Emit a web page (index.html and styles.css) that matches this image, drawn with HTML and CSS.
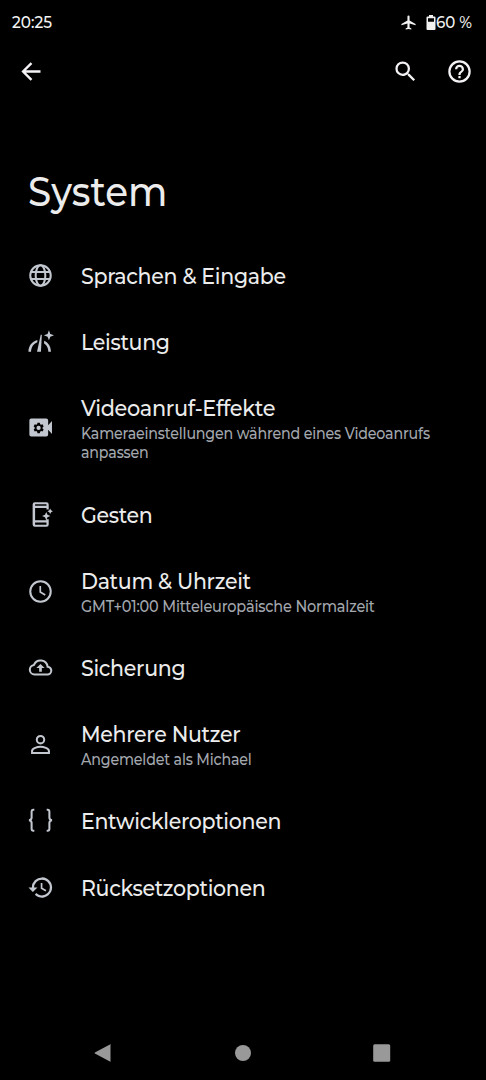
FILE: index.html
```html
<!DOCTYPE html>
<html lang="de">
<head>
<meta charset="utf-8">
<title>System</title>
<link rel="stylesheet" href="styles.css">
</head>
<body>
<div class="screen">
  <header class="status">
    <span class="time">20:25</span>
    <svg class="plane" viewBox="0 0 24 24"><path d="M22 16v-2l-8.500-5V3.500a1.500 1.500 0 0 0-3 0V9L2 14v2l8.500-2.500V19L8 20.500V22l4-1 4 1v-1.500L13.500 19v-5.500z"/></svg>
    <svg class="battery" viewBox="0 0 10 16"><path fill-rule="evenodd" d="M3 0h4v1.500h1.500q1 0 1 1v11.500q0 1-1 1H1.500q-1 0-1-1V2.500q0-1 1-1H3zM2 3.200v3.500h6V3.200z"/></svg>
    <span class="percent">60 %</span>
  </header>
  <nav class="toolbar">
    <svg class="tool back" viewBox="0 0 24 24"><path d="M20 12H5M12 4.500 4.500 12l7.500 7.500"/></svg>
    <svg class="tool search" viewBox="0 0 24 24"><path d="M15.500 14h-.79l-.28-.27A6.470 6.470 0 0 0 16 9.500 6.500 6.500 0 1 0 9.500 16c1.610 0 3.090-.59 4.230-1.570l.27.28v.79l5 4.990L20.490 19zM9.500 14a4.500 4.500 0 1 1 0-9 4.500 4.500 0 0 1 0 9z"/></svg>
    <svg class="tool help" viewBox="0 0 24 24"><path d="M11 18h2v-2h-2zm1-16a10 10 0 1 0 0 20 10 10 0 0 0 0-20zm0 18a8 8 0 1 1 0-16 8 8 0 0 1 0 16zm0-14a4 4 0 0 0-4 4h2a2 2 0 1 1 4 0c0 2-3 1.750-3 5h2c0-2.250 3-2.500 3-5a4 4 0 0 0-4-4z"/></svg>
  </nav>
  <h1 class="title">System</h1>
  <ul class="list">
    <li class="row">
      <svg class="icon up" viewBox="0 0 24 24"><g class="line"><circle cx="12" cy="12" r="9.100"/><ellipse cx="12" cy="12" rx="4.300" ry="9.100"/><path d="M3.500 8.800h17M3.500 15.200h17"/></g></svg>
      <div class="text"><span class="name">Sprachen &amp; Eingabe</span></div>
    </li>
    <li class="row">
      <svg class="icon" viewBox="0 0 24 24"><path d="M1.300 20.300c-.1-5 3-9.400 7.900-10.600v2c-3.500 1.300-5.500 4.400-5.600 8.600zM8.900 20.300 12.200 5.200h1l-.8 15.100zM15.200 10.500c3.900 1.600 6 5.200 6.100 9.800H19c-.1-3.300-1.200-5.800-3.800-7.400zM19.500 1.100l1.200 3.300 3.300 1.200-3.300 1.200-1.200 3.300-1.200-3.300-3.300-1.200 3.300-1.200z"/></svg>
      <div class="text"><span class="name">Leistung</span></div>
    </li>
    <li class="row triple">
      <svg class="icon up" viewBox="0 0 24 24"><path fill-rule="evenodd" d="M3.800 4h13.300q1.700 0 1.700 1.700V10l3.400-3.700v11.400l-3.400-3.700v4.300q0 1.700-1.700 1.700H3.800q-1.700 0-1.700-1.700V5.700Q2.100 4 3.800 4zM9.300 7.800l-.3 1.300-.8.500-1.300-.4-1 1.800 1 .9v1l-1 .9 1 1.800 1.300-.4.800.5.300 1.300h2.100l.3-1.300.8-.5 1.300.4 1-1.800-1-.9v-1l1-.9-1-1.800-1.300.4-.8-.5-.3-1.300zM10.300 10.500a1.900 1.900 0 1 1 0 3.800 1.900 1.900 0 0 1 0-3.800z"/></svg>
      <div class="text raised"><span class="name effects">Videoanruf-Effekte</span><span class="summary">Kameraeinstellungen während eines Videoanrufs<br>anpassen</span></div>
    </li>
    <li class="row">
      <svg class="icon up" viewBox="0 0 24 24"><path fill-rule="evenodd" d="M7 1h10.300q2 0 2 2v4.500h-2V6.200H7.200v11h10.100v-1h2v4.600q0 2-2 2H7q-2 0-2-2V3q0-2 2-2zm.2 1.800v1.500h10.100V2.800zm0 16.300V21h10.100v-1.900zM17.100 9.700l1.100 2.600 2.600 1.100-2.600 1.100-1.100 2.600-1.100-2.600-2.600-1.100 2.600-1.100zM20.600 6.700l.8 1.600 1.600.8-1.600.8-.8 1.600-.8-1.600-1.600-.8 1.600-.8z"/></svg>
      <div class="text"><span class="name">Gesten</span></div>
    </li>
    <li class="row double">
      <svg class="icon up" viewBox="0 0 24 24"><g class="line"><circle cx="12" cy="12" r="9.100"/><path d="M11.800 7v5.500l4.400 2.600" stroke-width="1.500"/></g></svg>
      <div class="text raised"><span class="name">Datum &amp; Uhrzeit</span><span class="summary zone">GMT+01:00 Mitteleuropäische Normalzeit</span></div>
    </li>
    <li class="row">
      <svg class="icon up" viewBox="0 0 24 24"><path class="line" d="M6.700 18.200h11.300a3.300 3.300 0 0 0 .3-6.900A6.300 6.300 0 0 0 6.200 9.700a4.270 4.270 0 0 0 .5 8.500z"/><path d="M12 8.800l3.700 3.700h-2.500v3.300h-2.400v-3.300H8.300z"/></svg>
      <div class="text raised"><span class="name">Sicherung</span></div>
    </li>
    <li class="row double">
      <svg class="icon up" viewBox="0 0 24 24"><g class="line"><circle cx="12" cy="7.700" r="3.300"/><path d="M4.500 19.500v-1.800c0-2.400 4.800-3.700 7.500-3.700s7.500 1.300 7.500 3.700v1.800z"/></g></svg>
      <div class="text"><span class="name">Mehrere Nutzer</span><span class="summary">Angemeldet als Michael</span></div>
    </li>
    <li class="row">
      <svg class="icon up" viewBox="0 0 24 24"><path class="line" d="M6.500 2.500H5.600q-1.500 0-1.500 1.700v5.200q0 2.100-2.300 2.400 2.300.3 2.300 2.400v5.200q0 1.700 1.500 1.700h.9M17.500 2.500h.9q1.500 0 1.500 1.700v5.200q0 2.100 2.300 2.400-2.300.3-2.300 2.400v5.200q0 1.700-1.500 1.700h-.9"/></svg>
      <div class="text"><span class="name">Entwickleroptionen</span></div>
    </li>
    <li class="row">
      <svg class="icon up" viewBox="0 0 24 24"><path d="M13.300 3a9 9 0 0 0-9 9h-3l3.900 3.900.07.14L9.300 12h-3a7 7 0 1 1 7 7c-1.930 0-3.680-.79-4.940-2.060l-1.420 1.420A9 9 0 1 0 13.300 3zm-1.100 5v5l4.280 2.540.72-1.210-3.500-2.080V8z"/></svg>
      <div class="text"><span class="name">Rücksetzoptionen</span></div>
    </li>
  </ul>
  <footer class="navbar">
    <svg viewBox="0 0 20 20"><path d="M17.500 1.600v16.800q0 .5-.6.200L1.900 10.500q-.7-.5 0-1L16.900 1.400q.6-.3.600.2z"/></svg>
    <svg viewBox="0 0 20 20"><circle cx="10" cy="10" r="8"/></svg>
    <svg viewBox="0 0 20 20"><rect x="1.200" y="1.300" width="17" height="17.500" rx="1.500"/></svg>
  </footer>
</div>
</body>
</html>
```
FILE: styles.css
```css
* { box-sizing: border-box; }
body { margin: 0; background: #000; }
.screen {
  width: 486px;
  height: 1080px;
  display: flex;
  flex-direction: column;
  background: #000;
  color: #ececec;
  font-family: Montserrat, Inter, sans-serif;
  font-weight: 500;
  font-variant-ligatures: none;
  overflow: hidden;
}
.screen svg { display: block; flex: none; fill: currentColor; }
.status {
  height: 45px;
  padding: 0 12px;
  display: flex;
  align-items: center;
  font-size: 16px;
  color: #f2f2f2;
}
/* Slightly condensed text */
.time, .title, .name, .summary { transform: scaleX(0.913); transform-origin: 0 50%; }
.time { flex: 1; transform: scaleX(0.955); }
.plane { width: 17px; height: 17px; margin-right: 9px; }
.battery { width: 10px; height: 16px; margin-right: 0; }
.percent { width: 38px; white-space: nowrap; transform: scaleX(0.94); transform-origin: 0 50%; }
.toolbar {
  height: 53.600px;
  padding: 0 13.500px 0 18px;
  display: flex;
  align-items: center;
  color: #f5f2f6;
}
.tool { width: 27px; height: 27px; }
.back { margin-right: auto; }
.screen .back { fill: none; stroke: currentColor; stroke-width: 2.100; }
.search { margin-right: 27px; }
.title {
  margin: 64.500px 0 0 27.500px;
  height: 80px;
  font-size: 40px;
  line-height: 58px;
  font-weight: 500;
  transform: scaleX(0.932);
}
.list { margin: 0; padding: 0; list-style: none; flex: 1; }
.row {
  display: flex;
  align-items: center;
  gap: 27px;
  height: 66.200px;
  padding-left: 27px;
}
.double { height: 87.100px; }
.triple { height: 106.800px; }
.icon { width: 27px; height: 27px; color: #c3c7cf; }
.up { margin-bottom: 2px; }
.text { display: flex; flex-direction: column; white-space: nowrap; }
.raised { padding-bottom: 1.200px; }
.line { fill: none; stroke: currentColor; stroke-width: 1.800; }
.name { font-size: 22.500px; line-height: 29px; letter-spacing: -0.350px; }
.summary { margin-top: 1px; font-size: 16px; line-height: 19.700px; letter-spacing: -0.200px; color: #a3a7ae; transform: scaleX(0.89); }
.effects { transform: scaleX(0.926); }
.zone { transform: scaleX(0.905); }
.navbar {
  height: 54px;
  padding: 0 94px 0 93px;
  display: flex;
  align-items: center;
  justify-content: space-between;
  color: #999;
}
.navbar svg { width: 20px; height: 20px; }
```
